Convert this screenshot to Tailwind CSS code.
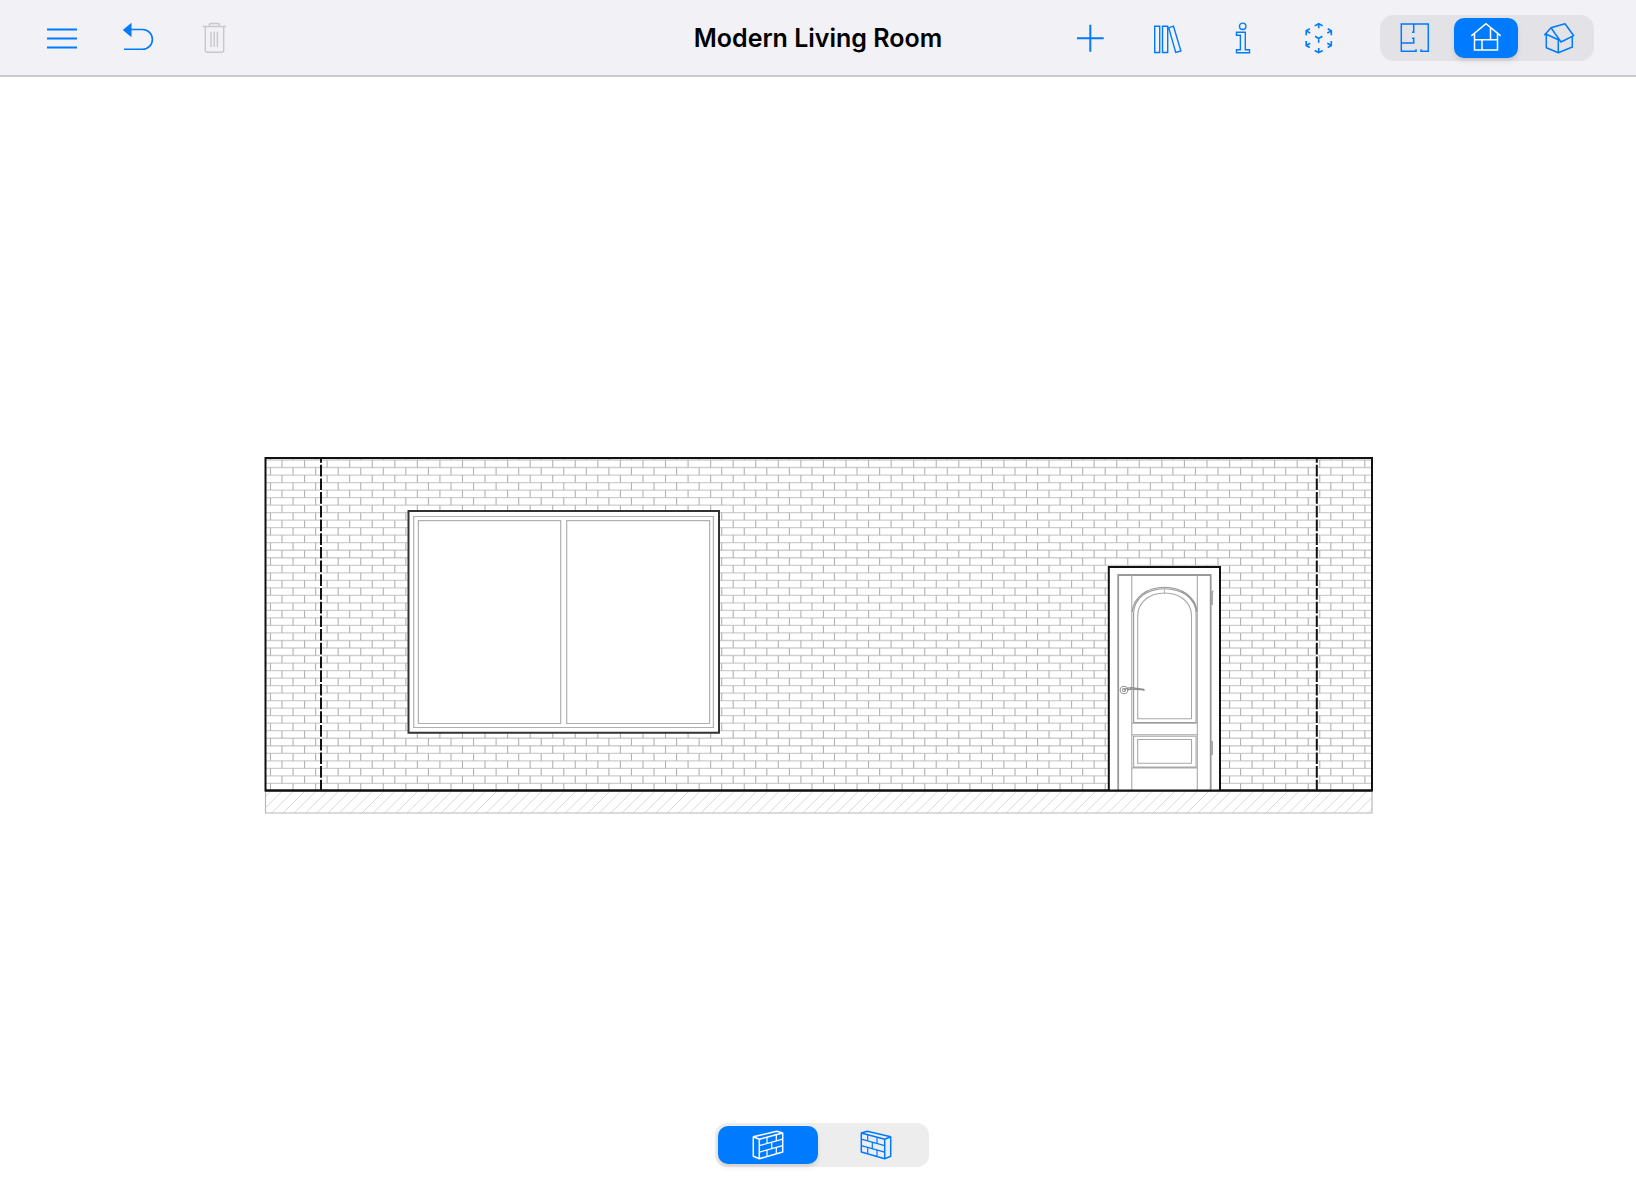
<!DOCTYPE html>
<html lang="en">
<head>
  <meta charset="UTF-8" />
  <meta name="viewport" content="width=device-width, initial-scale=1.0"/>
  <title>Modern Living Room</title>
  <script src="https://cdn.jsdelivr.net/npm/@tailwindcss/browser@4"></script>
</head>
<body class="min-h-screen flex flex-col bg-white font-['Inter',sans-serif]">

  <!-- Toolbar -->
  <header class="grid grid-cols-[1fr_auto_1fr] items-center h-[77px] bg-[#f2f1f6] border-b-2 border-[#cbcacf] px-6">
    <div class="flex items-center text-[#007aff]">
      <button type="button" aria-label="Menu" class="w-[76px] h-12 flex items-center justify-center">
        <svg class="size-8" viewBox="0 0 32 32" fill="none" stroke="currentColor" stroke-width="1.8"><path d="M1 7.5h30M1 16.5h30M1 25.5h30"/></svg>
      </button>
      <button type="button" aria-label="Undo" class="w-[76px] h-12 flex items-center justify-center">
        <svg class="size-8" viewBox="0 0 32 32" fill="none" stroke="currentColor" stroke-width="1.6"><path d="M9 7.5h11.500a9.9 9.9 0 0 1 0 19.8H2"/><path d="M.8 8 9.500.8v14.4z" fill="currentColor" stroke="none"/></svg>
      </button>
      <button type="button" aria-label="Delete" disabled class="w-[76px] h-12 flex items-center justify-center text-[#c8c7cc]">
        <svg class="size-8" viewBox="0 0 32 32" fill="none" stroke="currentColor" stroke-width="1.4"><path d="M4.7 4.5H28M11.3 4.5V3a1.5 1.5 0 0 1 1.5-1.5h7A1.5 1.5 0 0 1 21.3 3v1.5M7.3 4.5v24a1.8 1.8 0 0 0 1.8 1.8h14.8a1.8 1.8 0 0 0 1.8-1.8v-24M13 9.7V25M16.2 9.7V25M19.4 9.7V25"/></svg>
      </button>
    </div>

    <h1 class="text-[25px] leading-8 font-semibold text-black whitespace-nowrap">Modern Living Room</h1>

    <div class="flex items-center justify-end text-[#007aff]">
      <button type="button" aria-label="Add" class="w-[76px] h-12 flex items-center justify-center">
        <svg class="size-8" viewBox="0 0 32 32" fill="none" stroke="currentColor" stroke-width="2"><path d="M2 16.3h26.7M15.3 2.7v27"/></svg>
      </button>
      <button type="button" aria-label="Library" class="w-[76px] h-12 flex items-center justify-center">
        <svg class="size-8" viewBox="0 0 32 32" fill="none" stroke="currentColor" stroke-width="1.4"><path d="M3.7 4.2h5v26.3h-5zM11.5 4.2h5.2v26.3h-5.2zM17.7 5.8l4.8-1.6 7.4 24.8-5.2 1.5z"/></svg>
      </button>
      <button type="button" aria-label="Info" class="w-[76px] h-12 flex items-center justify-center">
        <svg class="size-8" viewBox="0 0 32 32" fill="none" stroke="currentColor" stroke-width="1.4"><circle cx="15.7" cy="4.3" r="3.2"/><path d="M9.5 10.3h8.8v17.4h4.2v3h-13v-3h3.9V13.3H9.5z"/></svg>
      </button>
      <button type="button" aria-label="View in AR" class="w-[76px] h-12 flex items-center justify-center">
        <svg class="size-8" viewBox="0 0 32 32" fill="none" stroke="currentColor" stroke-width="1.6"><path d="M11.7 3.9l4-2.2 4 2.2M15.7 1.7v4.6M11.7 28.5l4 2.2 4-2.2M15.7 30.7v-4.6M3.2 13.3V8.8l3.6-2M3.2 8.8l4 2.3M28.3 13.3V8.8l-3.6-2M28.3 8.8l-4 2.3M3.2 19v4.5l3.6 2M3.2 23.5l4-2.3M28.3 19v4.5l-3.6 2M28.3 23.5l-4-2.3M12 14.3l3.7 2.2 3.7-2.2M15.7 16.5v4.2"/></svg>
      </button>

      <!-- View switch -->
      <div class="ml-[23px] mr-[18px] flex h-[46px] w-[214px] rounded-[14px] bg-[#e3e2e7] p-[3px]">
        <button type="button" aria-label="Floor plan" class="w-[67px] pr-1 flex items-center justify-center">
          <svg class="size-8" viewBox="0 0 32 32" fill="none" stroke="currentColor" stroke-width="1.5"><path d="M17 27.3v2H2.3V2h27v27.3H22v-2M14.7 2v8.3H13M13 16.3h1.7V21H2.3"/></svg>
        </button>
        <button type="button" aria-label="Elevation" aria-pressed="true" class="w-16 mx-1 flex items-center justify-center rounded-[10px] bg-[#007aff] text-white shadow-md">
          <svg class="size-8" viewBox="0 0 32 32" fill="none" stroke="currentColor" stroke-width="1.5"><path d="M1.3 13.8 16 1.7l14.7 12.1M4.5 11.5V28h23V11.5M4.5 17.7h23M20.5 5.5v12.2M12 17.7V28"/></svg>
        </button>
        <button type="button" aria-label="3D view" class="flex-1 pl-1 flex items-center justify-center">
          <svg class="size-8" viewBox="0 0 32 32" fill="none" stroke="currentColor" stroke-width="1.5" stroke-linejoin="round"><path d="M1.3 13.3 8 5.7l14-4 8.7 12L18 20 8 5.7M3.3 11.5v14.2l12 5 14-5.7V14.5M15.3 16.3v14.4M3.3 12.2l12 5.6"/></svg>
        </button>
      </div>
    </div>
  </header>

  <!-- Drawing -->
  <main class="relative flex-1">
    <svg class="block w-full h-auto" viewBox="0 78 1636 1119" fill="none" role="img" aria-label="Wall elevation">
      <!-- Slab -->
      <clipPath id="slab"><path d="M265.500 792h1106.500v22h-1106.500z"/></clipPath>
      <path id="hatch" clip-path="url(#slab)" stroke="#d4d4d4" stroke-width=".9"/>
      <path d="M265.5 792h1106.5v22h-1106.5z" stroke="#b8b8b8" stroke-width="1.2"/>

      <!-- Wall -->
      <path id="courses" stroke="#cecece" stroke-width="1.3"/>
      <path id="joints" stroke="#b2b2b2" stroke-width="1.1"/>
      <path d="M265.5 459h1106.5v332.4h-1106.5z" stroke="#111" stroke-width="2"/>
      <path d="M321 460v331M1316.8 460v331" stroke="#fff" stroke-width="2"/>
      <path d="M321 460v331M1316.800 460v331" stroke="#111" stroke-width="2" stroke-dasharray="11.7 2" stroke-dashoffset="8"/>

      <!-- Window -->
      <path d="M408.5 512h310.500v221.800h-310.500z" fill="#fff" stroke="#333" stroke-width="2"/>
      <path d="M413.7 517.5h299.700v211h-299.700zM418.400 521.600h142.300v202.900h-142.300zM566.700 521.600h142.900v202.900h-142.900z" stroke="#b0b0b0" stroke-width="1.2"/>

      <!-- Door -->
      <path d="M1108.8 791.4V568h111.200v223.400" fill="#fff" stroke="#111" stroke-width="2"/>
      <path d="M1118.2 791V576h92.500V791" stroke="#999" stroke-width="1.8"/>
      <g stroke="#a8a8a8" stroke-width="1.1">
        <path d="M1131.800 576v215M1197.300 576v215"/>
        <path d="M1133.600 723.500V615c0-16 14-25.300 31-25.300s31.500 9.300 31.500 25.300v108.500zM1132.300 613c1-15 15-24.800 32.200-24.800s31.500 9.800 32.600 24.800" stroke="#999"/>
        <path d="M1137.700 719.700V617c0-14 12-23 27-23s26.800 9 26.800 23v102.700z"/>
        <path d="M1164.500 588v7" stroke-width=".8"/>
        <path d="M1131.800 724.200h65.500M1131.800 735.700h65.500M1133.600 737.200h62.500v30.800h-62.500zM1131.800 769h65.500M1137.700 740.500h53.800v23.800h-53.800z"/>
        <path d="M1212 592.500h1.500M1212 592.500v13.500M1212 742v14" stroke-width="2"/>
        <circle cx="1124" cy="691" r="3.800" stroke="#999"/>
        <circle cx="1124" cy="691" r="1.600" stroke="#999"/>
        <path d="M1124 691c5-3.500 11-2.500 20-.6v.9c-7-1-12-2.300-17-.3" stroke="#8c8c8c"/>
      </g>
      <path d="M265 791.400h1107" stroke="#111" stroke-width="2"/>
    </svg>

    <!-- Wall side switch -->
    <div class="absolute bottom-[30px] left-1/2 -translate-x-1/2 ml-1 flex h-11 w-[214px] rounded-xl bg-[#ededed] p-[3px] text-[#007aff]">
      <button type="button" aria-label="Front side" aria-pressed="true" class="w-[100px] flex items-center justify-center rounded-[10px] bg-[#007aff] text-white shadow-md">
        <svg class="size-8" viewBox="0 0 32 32" fill="none" stroke="currentColor" stroke-width="1.5" stroke-linejoin="round"><path d="M7.3 10.3 30.7 4v19L7.3 29.7zL1.3 7.7v19.6l6 2.4M1.3 7.7l23.400-5.500 6 1.800"/><path d="M7.300 16.700l23.400-6.500M7.300 23.200l23.400-6.500M15 8.300v6.200M24.300 5.800v6.200M19.700 13.300v6.400M15 21.100v6.300M24.300 18.500v6.300" stroke-width="1.2"/></svg>
      </button>
      <button type="button" aria-label="Back side" class="flex-1 pl-2 flex items-center justify-center">
        <svg class="size-8 -scale-x-100" viewBox="0 0 32 32" fill="none" stroke="currentColor" stroke-width="1.5" stroke-linejoin="round"><path d="M7.3 10.3 30.7 4v19L7.3 29.7zL1.3 7.7v19.6l6 2.4M1.3 7.7l23.400-5.500 6 1.800"/><path d="M7.300 16.700l23.400-6.500M7.300 23.200l23.400-6.500M15 8.300v6.200M24.300 5.800v6.200M19.700 13.300v6.400M15 21.100v6.300M24.300 18.500v6.300" stroke-width="1.2"/></svg>
      </button>
    </div>
  </main>

  <script>
    const wall = { left: 265.5, right: 1372, top: 459, bottom: 791.4 };
    const brick = { w: 22.56, h: 7.52 };

    // Brick courses and the staggered joints between them
    let courses = '';
    let joints = '';
    let row = 0;
    for (let y = 461 - brick.h; y < wall.bottom; y += brick.h) {
      const y1 = Math.max(y, wall.top);
      const y2 = Math.min(y + brick.h, wall.bottom);
      courses += `M${wall.left} ${y1}H${wall.right}`;
      for (let x = row % 2 ? 282 - brick.w : 270.5; x < wall.right; x += brick.w) {
        if (x > wall.left) joints += `M${x} ${y1}V${y2}`;
      }
      row++;
    }
    document.getElementById('courses').setAttribute('d', courses);
    document.getElementById('joints').setAttribute('d', joints);

    // Diagonal hatch of the slab
    let hatch = '';
    for (let x = 249; x < wall.right; x += 11.3) {
      hatch += `M${x} 814l22-22`;
    }
    document.getElementById('hatch').setAttribute('d', hatch);
  </script>

</body>
</html>
